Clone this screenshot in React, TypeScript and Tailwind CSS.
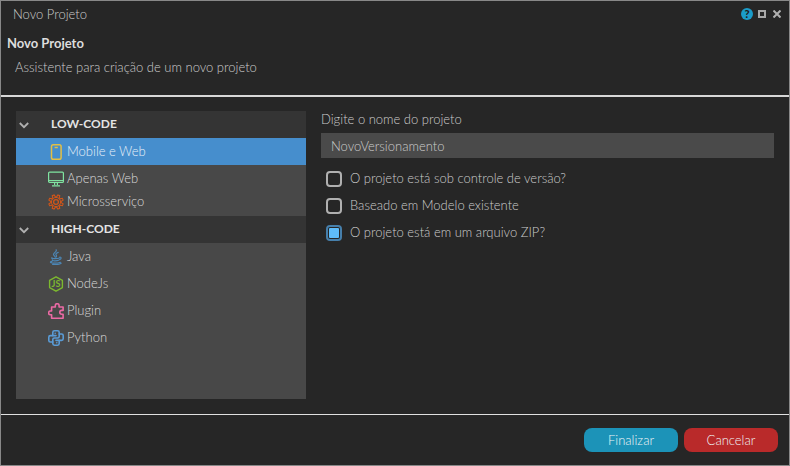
import { useState } from "react";
import type { ReactNode } from "react";
import { TbBrandPython } from "react-icons/tb";

type Item = { name: string; icon: ReactNode; compact?: boolean };
type Group = { title: string; items: Item[] };

function PhoneIcon() {
  return (
    <svg className="size-4" viewBox="0 0 16 16" fill="none" stroke="#e3bf45" strokeWidth="1.5">
      <rect x="3.5" y="0.8" width="9.6" height="14.4" rx="1.8" />
      <path d="M6.6 3.5h3.2" />
    </svg>
  );
}

function MonitorIcon() {
  return (
    <svg className="size-4" viewBox="0 0 16 16" fill="none" stroke="#7fe3a0" strokeWidth="1.2">
      <rect x="0.6" y="1.1" width="14.8" height="10.3" rx="1" />
      <path d="M1 9.5h14M6.6 11.5v2.6M9.4 11.5v2.6M4 14.8h8" />
    </svg>
  );
}

const teeth = [0, 45, 90, 135, 180, 225, 270, 315];

function GearIcon() {
  return (
    <svg className="size-4" viewBox="0 0 16 16" fill="none" stroke="#cf5519">
      {teeth.map((angle) => (
        <path key={angle} d="M6.4 3.6L7 0.7h2l0.6 2.9" strokeWidth="1.1" transform={`rotate(${angle + 22.5} 8 8)`} />
      ))}
      <circle cx="8" cy="8" r="4.6" strokeWidth="1" />
      <circle cx="8" cy="8" r="2.4" strokeWidth="1.3" />
    </svg>
  );
}

function JavaIcon() {
  return (
    <svg className="size-4" viewBox="0 0 16 16" fill="none" stroke="#4c86b5" strokeWidth="1.2" strokeLinecap="round">
      <path d="M8.2 0.8c1.2 2-3.4 3-2.6 5 .3.9 1.4 1.5 1.6 2.4" />
      <path d="M10.2 3.4c-2 .7-2.8 1.6-2 2.7.6.9.4 1.5-.2 2.1" />
      <path d="M4 8.7c-2.4.9 5 1.4 7.4.3M11.8 8.2c1.8-.3 1.8 1.8-.5 2.6" />
      <path d="M4.4 10.9c-.6 1.1 4.4 1.2 6.1.4M4 12.4c-5 1.2 3.6 2.8 8.4.9M4.5 15.3c3 .4 7 .2 8.6-1.1" />
    </svg>
  );
}

function NodeIcon() {
  return (
    <svg className="size-4" viewBox="0 0 16 16">
      <path d="M8 0.8l6.4 3.6v7.2L8 15.2l-6.4-3.6V4.4z" fill="none" stroke="#7cb82f" strokeWidth="1.4" strokeLinejoin="round" />
      <text x="8" y="11.2" textAnchor="middle" fontSize="9" fontWeight="700" fill="#7cb82f">JS</text>
    </svg>
  );
}

function PuzzleIcon() {
  return (
    <svg className="size-4" viewBox="0 0 16 16" fill="none" stroke="#ec6aa5" strokeWidth="1.6" strokeLinejoin="round">
      <path d="M3.6 4h3.7V2.6a1.9 1.9 0 0 1 3.8 0V4h4v3.4h-1.4a1.9 1.9 0 0 0 0 3.8h1.4v4H3.6v-3.4H2.5a1.9 1.9 0 0 1 0-3.8h1.1z" />
    </svg>
  );
}

const groups: Group[] = [
  {
    title: "LOW-CODE",
    items: [
      { name: "Mobile e Web", icon: <PhoneIcon /> },
      { name: "Apenas Web", icon: <MonitorIcon /> },
      { name: "Microsserviço", icon: <GearIcon />, compact: true },
    ],
  },
  {
    title: "HIGH-CODE",
    items: [
      { name: "Java", icon: <JavaIcon /> },
      { name: "NodeJs", icon: <NodeIcon /> },
      { name: "Plugin", icon: <PuzzleIcon /> },
      { name: "Python", icon: <TbBrandPython viewBox="2 2 20 20" className="size-4 text-[#5a9bd5]" /> },
    ],
  },
];

const options = [
  { id: "versao", label: "O projeto está sob controle de versão?", checked: false },
  { id: "modelo", label: "Baseado em Modelo existente", checked: false },
  { id: "zip", label: "O projeto está em um arquivo ZIP?", checked: true },
];

export default function App() {
  const [selected, setSelected] = useState("Mobile e Web");
  const [closed, setClosed] = useState<string[]>([]);

  const toggle = (title: string) =>
    setClosed((c) => (c.includes(title) ? c.filter((t) => t !== title) : [...c, title]));

  return (
    <div className="flex min-h-screen flex-col border border-[#888888] bg-[#262626] font-['Lato',sans-serif] text-[13px] font-light leading-4 text-[#cccccc]">
      {/* Title bar */}
      <div className="flex h-6 items-center justify-between pl-3 pr-1.5 pt-0.5">
        <span>Novo Projeto</span>
        <div className="flex items-center gap-[3px]">
          <button aria-label="Ajuda" className="flex size-3 items-center justify-center rounded-full bg-[#1b9cc9] text-[11px] font-black leading-3 text-[#202020]">
            ?
          </button>
          <button aria-label="Maximizar" className="flex size-3 items-center justify-center">
            <svg className="size-2" viewBox="0 0 8 8" fill="none" stroke="#a8a8a8" strokeWidth="2">
              <rect x="1" y="1" width="6" height="6" />
            </svg>
          </button>
          <button aria-label="Fechar" className="flex size-3 items-center justify-center">
            <svg className="size-2" viewBox="0 0 8 8" stroke="#b0b0b0" strokeWidth="2">
              <path d="M0.5 0.5l7 7M7.5 0.5l-7 7" />
            </svg>
          </button>
        </div>
      </div>

      {/* Wizard heading */}
      <header className="border-b-2 border-[#d8d8d8] px-1.5 pb-5 pt-2.5">
        <h1 className="font-bold text-[#dddddd]">Novo Projeto</h1>
        <p className="mt-2 pl-2">Assistente para criação de um novo projeto</p>
      </header>

      <main className="flex flex-1 gap-[15px] px-[15px] pb-[15px] pt-3.5">
        <nav aria-label="Tipos de projeto" className="w-[290px] shrink-0 bg-[#484848]">
          {groups.map((group) => (
            <section key={group.title}>
              <button
                className="flex h-[27px] w-full items-center gap-[22px] bg-[#343434] pl-[3px] text-xs font-bold text-[#e4e4e4]"
                aria-expanded={!closed.includes(group.title)}
                onClick={() => toggle(group.title)}
              >
                <svg className="size-2.5" viewBox="0 0 10 10" fill="none" stroke="#b0b0b0" strokeWidth="1.8">
                  <path d="M0.8 3l4.2 4.2L9.2 3" />
                </svg>
                <span className="pb-0.5">{group.title}</span>
              </button>
              {!closed.includes(group.title) && (
                <ul>
                  {group.items.map((item) => (
                    <li key={item.name}>
                      <button
                        onClick={() => setSelected(item.name)}
                        className={`flex w-full items-center gap-[3px] pl-8 ${item.compact ? "h-6 pb-1" : "h-[27px]"} ${
                          selected === item.name ? "bg-[#468ecd] text-[#e6f0f8]" : "text-[#dadada]"
                        }`}
                      >
                        {item.icon}
                        <span className="pb-0.5">{item.name}</span>
                      </button>
                    </li>
                  ))}
                </ul>
              )}
            </section>
          ))}
        </nav>

        <form className="min-w-0 flex-1">
          <label htmlFor="nome" className="block">
            Digite o nome do projeto
          </label>
          <input
            id="nome"
            type="text"
            defaultValue="NovoVersionamento"
            className="mt-1.5 h-[25px] w-full bg-[#4a4a4a] px-2.5 outline-none"
          />
          <div className="mt-3 flex flex-col gap-[9px] pl-[5px]">
            {options.map((option) => (
              <div key={option.id} className="flex items-center gap-2">
                <input
                  id={option.id}
                  type="checkbox"
                  defaultChecked={option.checked}
                  className="size-4 appearance-none rounded-sm border-2 border-[#b0b0b0] p-px checked:border-[#467fab] checked:bg-[#5ebcfa] checked:bg-clip-content"
                />
                <label htmlFor={option.id} className="pb-0.5">
                  {option.label}
                </label>
              </div>
            ))}
          </div>
        </form>
      </main>

      <footer className="flex justify-end gap-1.5 border-t border-[#e0e0e0] px-[11px] py-[13px] text-[#eef4f6]">
        <button className="h-6 w-[94px] rounded-lg bg-[#1c93b8]">Finalizar</button>
        <button className="h-6 w-[94px] rounded-lg bg-[#b92a2a]">Cancelar</button>
      </footer>
    </div>
  );
}
